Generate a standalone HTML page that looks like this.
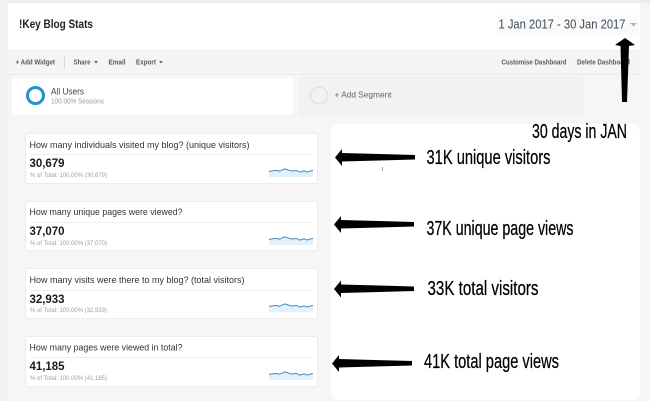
<!DOCTYPE html>
<html><head><meta charset="utf-8">
<style>
html,body{margin:0;padding:0;width:650px;height:401px;overflow:hidden;background:#f6f6f6}
svg{display:block;font-family:"Liberation Sans",sans-serif;filter:blur(.35px)}
.h{font-family:"Liberation Sans",sans-serif;fill:#000;stroke:#000;stroke-width:.25}
</style></head>
<body>
<svg width="650" height="401" viewBox="0 0 650 401" xmlns="http://www.w3.org/2000/svg">
<defs>
<g id="spark">
<path d="M0 6.500 C2 6 4 5.500 7 5.500 S9 6.500 11 6 S14 4 16 4 S20 6 23 6 S25 5.500 27 5.500 S29 7 31 7 S33 6 35 6 S37 7 38 7 S42 5.500 44 5.500 L44 12 L0 12Z" fill="#e3f1fb"/>
<path d="M0 6.500 C2 6 4 5.500 7 5.500 S9 6.500 11 6 S14 4 16 4 S20 6 23 6 S25 5.500 27 5.500 S29 7 31 7 S33 6 35 6 S37 7 38 7 S42 5.500 44 5.500" fill="none" stroke="#3f88bd" stroke-width="1"/>
</g>
<g id="arr">
<path d="M0 0 L7 -8.500 L7 -4.500 L80 -2.500 L80 2 L7 4 L7 8.500Z" fill="#000"/>
</g>
</defs>
<rect width="650" height="401" fill="#f6f6f6"/>
<rect x="0" y="0" width="650" height="3" fill="#ececec"/>
<rect x="0" y="0" width="8" height="401" fill="#f1f1f1"/>

<!-- header -->
<rect x="8" y="3" width="632" height="47" fill="#fff"/>
<text x="19" y="28" font-size="11.500" font-weight="700" fill="#222" textLength="74" lengthAdjust="spacingAndGlyphs">!Key Blog Stats</text>
<rect x="497" y="15" width="142" height="20" rx="3" fill="#fafafa"/>
<text x="498.500" y="28.500" font-size="13" fill="#3d4a57" textLength="127" lengthAdjust="spacingAndGlyphs">1 Jan 2017 - 30 Jan 2017</text>
<path d="M630 23 L637 23 L633.500 26.500Z" fill="#b5b5b5"/>

<!-- toolbar -->
<rect x="8" y="50" width="632" height="24" fill="#f5f5f5"/>
<rect x="8" y="50" width="632" height="1" fill="#ebebeb"/>
<rect x="8" y="74" width="632" height="1" fill="#ebebeb"/>
<rect x="64" y="56" width="1" height="13" fill="#dcdcdc"/>
<g font-size="7" font-weight="700" fill="#5c5c5c">
<text x="15.500" y="64.500" textLength="39.500" lengthAdjust="spacingAndGlyphs">+ Add Widget</text>
<text x="73.500" y="64.500" textLength="17" lengthAdjust="spacingAndGlyphs">Share</text>
<text x="108.500" y="64.500" textLength="17" lengthAdjust="spacingAndGlyphs">Email</text>
<text x="136" y="64.500" textLength="20" lengthAdjust="spacingAndGlyphs">Export</text>
<text x="501.500" y="64.500" textLength="65" lengthAdjust="spacingAndGlyphs">Customise Dashboard</text>
<text x="577" y="64.500" textLength="53" lengthAdjust="spacingAndGlyphs">Delete Dashboard</text>
</g>
<path d="M94 61 L98 61 L96 63.500Z M159 61 L163 61 L161 63.500Z" fill="#666"/>

<!-- segments -->
<rect x="12" y="78" width="281" height="36" rx="3" fill="#fff"/>
<circle cx="35.500" cy="95.500" r="8" fill="none" stroke="#1f93cf" stroke-width="3"/>
<text x="51" y="94.500" font-size="9" fill="#444" textLength="33" lengthAdjust="spacingAndGlyphs">All Users</text>
<text x="51" y="103.500" font-size="7" fill="#9a9a9a" textLength="53" lengthAdjust="spacingAndGlyphs">100.00% Sessions</text>
<rect x="299.500" y="77.500" width="283" height="37" rx="3" fill="#f2f2f2" stroke="#eeeeee"/>
<circle cx="319" cy="95.500" r="8.500" fill="none" stroke="#e2e2e2" stroke-width="1.500"/>
<text x="334.500" y="97.500" font-size="8.500" fill="#666" textLength="57" lengthAdjust="spacingAndGlyphs">+ Add Segment</text>

<!-- annotation panel -->
<rect x="331" y="124" width="309" height="276" rx="8" fill="#fff"/>

<!-- cards -->
<g>
<rect x="25.500" y="133.500" width="292" height="50" rx="2" fill="#fff" stroke="#ececec"/>
<text x="29.500" y="148" font-size="9.200" fill="#333" textLength="220" lengthAdjust="spacingAndGlyphs">How many individuals visited my blog? (unique visitors)</text>
<rect x="30" y="154" width="283" height="1" fill="#eee"/>
<text x="29.500" y="167" font-size="12" font-weight="700" fill="#1a1a1a" textLength="35" lengthAdjust="spacingAndGlyphs">30,679</text>
<text x="30" y="177" font-size="6" fill="#a0a0a0" textLength="77" lengthAdjust="spacingAndGlyphs">% of Total: 100.00% (30,679)</text>
<use href="#spark" x="269" y="165"/>
</g>
<g>
<rect x="25.500" y="201.500" width="292" height="49" rx="2" fill="#fff" stroke="#ececec"/>
<text x="29.500" y="215" font-size="9.200" fill="#333" textLength="153" lengthAdjust="spacingAndGlyphs">How many unique pages were viewed?</text>
<rect x="30" y="222" width="283" height="1" fill="#eee"/>
<text x="29.500" y="235" font-size="12" font-weight="700" fill="#1a1a1a" textLength="35" lengthAdjust="spacingAndGlyphs">37,070</text>
<text x="30" y="245" font-size="6" fill="#a0a0a0" textLength="77" lengthAdjust="spacingAndGlyphs">% of Total: 100.00% (37,070)</text>
<use href="#spark" x="269" y="233"/>
</g>
<g>
<rect x="25.500" y="268.500" width="292" height="50" rx="2" fill="#fff" stroke="#ececec"/>
<text x="29.500" y="283" font-size="9.200" fill="#333" textLength="215" lengthAdjust="spacingAndGlyphs">How many visits were there to my blog? (total visitors)</text>
<rect x="30" y="290" width="283" height="1" fill="#eee"/>
<text x="29.500" y="303" font-size="12" font-weight="700" fill="#1a1a1a" textLength="35" lengthAdjust="spacingAndGlyphs">32,933</text>
<text x="30" y="312" font-size="6" fill="#a0a0a0" textLength="77" lengthAdjust="spacingAndGlyphs">% of Total: 100.00% (32,933)</text>
<use href="#spark" x="269" y="300"/>
</g>
<g>
<rect x="25.500" y="336.500" width="292" height="50" rx="2" fill="#fff" stroke="#ececec"/>
<text x="29.500" y="350.500" font-size="9.200" fill="#333" textLength="153" lengthAdjust="spacingAndGlyphs">How many pages were viewed in total?</text>
<rect x="30" y="357" width="283" height="1" fill="#eee"/>
<text x="29.500" y="370" font-size="12" font-weight="700" fill="#1a1a1a" textLength="35" lengthAdjust="spacingAndGlyphs">41,185</text>
<text x="30" y="380" font-size="6" fill="#a0a0a0" textLength="77" lengthAdjust="spacingAndGlyphs">% of Total: 100.00% (41,185)</text>
<use href="#spark" x="269" y="368"/>
</g>

<!-- arrows -->
<use href="#arr" x="335" y="157.500"/>
<use href="#arr" x="334" y="224.500"/>
<use href="#arr" x="334" y="289"/>
<use href="#arr" x="332" y="363.500"/>
<path d="M625 38 L635 45 L629 46 L627 102 L622 102 L620.500 46 L615 45Z" fill="#000"/>

<!-- annotations -->
<g font-size="20" class="h">
<text x="532" y="138" textLength="95" lengthAdjust="spacingAndGlyphs">30 days in JAN</text>
<text x="426.500" y="164" textLength="124" lengthAdjust="spacingAndGlyphs">31K unique visitors</text>
<text x="426.500" y="235" textLength="147" lengthAdjust="spacingAndGlyphs">37K unique page views</text>
<text x="427.500" y="295" textLength="111" lengthAdjust="spacingAndGlyphs">33K total visitors</text>
<text x="424" y="368" textLength="135" lengthAdjust="spacingAndGlyphs">41K total page views</text>
</g>
<text x="381.500" y="171" font-size="5" fill="#333">I</text>
</svg>
</body></html>
